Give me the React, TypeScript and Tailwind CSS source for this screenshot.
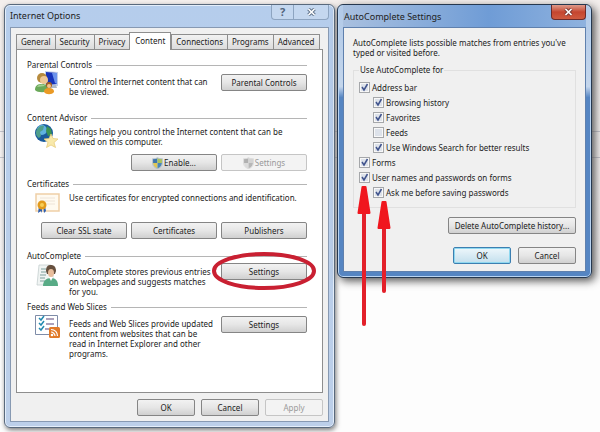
import type { ReactNode } from "react"
import clsx from "clsx"

const tabs = ["General", "Security", "Privacy", "Content", "Connections", "Programs", "Advanced"]

const options = [
  { id: "address", label: "Address bar", checked: true, nested: false },
  { id: "history", label: "Browsing history", checked: true, nested: true },
  { id: "favorites", label: "Favorites", checked: true, nested: true },
  { id: "feeds", label: "Feeds", checked: false, nested: true },
  { id: "search", label: "Use Windows Search for better results", checked: true, nested: true },
  { id: "forms", label: "Forms", checked: true, nested: false },
  { id: "passwords", label: "User names and passwords on forms", checked: true, nested: false },
  { id: "ask", label: "Ask me before saving passwords", checked: true, nested: true },
]

type ButtonProps = {
  children: ReactNode
  disabled?: boolean
  primary?: boolean
  className?: string
}

function Button({ children, disabled, primary, className }: ButtonProps) {
  return (
    <button
      type="button"
      disabled={disabled}
      className={clsx(
        "flex h-[17px] items-center justify-center gap-px whitespace-nowrap rounded-xs border",
        disabled && "border-[#c5c5c5] bg-[#f3f3f3] text-[#9a9a9a]",
        primary && "border-[#3c7fb1] bg-linear-to-b from-[#eef7fb] to-[#c3dfed] shadow-[inset_0_0_0_1px_#8fd8f0]",
        !disabled && !primary && "border-[#858585] bg-linear-to-b from-[#f2f2f2] via-[#e6e6e6] to-[#d0d0d0]",
        className,
      )}
    >
      {children}
    </button>
  )
}

function Shield({ faded }: { faded?: boolean }) {
  return (
    <svg width="11" height="12" viewBox="0 0 11 12" className={faded ? "opacity-50 grayscale" : ""}>
      <path d="M5.5 1C4 2 2.5 2 1 2v4h4.500z" fill="#3f77ac" />
      <path d="M5.5 1C7 2 8.500 2 10 2v4H5.500z" fill="#a9c25c" />
      <path d="M1 6h4.500v5.500C3 10.500 1.200 9 1 6z" fill="#e0c754" />
      <path d="M5.500 6H10c-.2 3-2 4.500-4.500 5.500z" fill="#4a86b8" />
      <path d="M5.500.6C7 1.700 8.600 1.700 10.400 1.700V6c0 3.200-2.200 4.800-4.900 5.700C2.800 10.800.6 9.200.6 6V1.700C2.400 1.700 4 1.700 5.500.6z" fill="none" stroke="#a9b9c4" strokeWidth=".8" />
    </svg>
  )
}

function ParentalIcon() {
  return (
    <svg width="26" height="25" viewBox="0 0 26 25">
      <path d="M11 1l13 1v14l-13 1z" fill="#c3cfe8" />
      <path d="M12 2l11 1v11l-11 1z" fill="#1733ba" />
      <path d="M18 3l5 0v11l-2-1z" fill="#6c93ec" />
      <path d="M12 16l10-1 1 3h-9z" fill="#aeb9c9" />
      <circle cx="8" cy="8" r="5" fill="#b78b3e" />
      <circle cx="10" cy="10" r="4" fill="#edc795" />
      <path d="M1 20c0-5 3-6 7-6s7 2 7 6c-2 3-12 3-14 0z" fill="#6ba95a" />
      <path d="M3 17c2-3 6-3 8-1-3 0-5 1-8 1z" fill="#a5cf94" />
      <circle cx="15" cy="15" r="3" fill="#a45f20" />
      <circle cx="15" cy="16" r="2" fill="#f0c490" />
      <path d="M10 22c0-3 2-4 5-4s5 1 5 4c-2 3-8 3-10 0z" fill="#ea9a25" />
    </svg>
  )
}

function AdvisorIcon() {
  return (
    <svg width="26" height="25" viewBox="0 0 26 25">
      <circle cx="10" cy="10" r="9" fill="#1a5b9c" />
      <circle cx="8" cy="7" r="5" fill="#5fb2df" />
      <path d="M3 6c2-3 5-4 7-3l-1 4-3 2 1 4-2 2c-3-2-4-5-2-9z" fill="#4f9f8a" />
      <path d="M13 3l4 3 1 6-4 1-2-5z" fill="#3b9352" />
      <path d="M17 11l2 4.500 5 .500-4 3.500 1.500 5-4.500-2.500-4.500 2.500 1.500-5-4-3.500 5-.5z" fill="#f8e9ab" stroke="#e6c873" strokeWidth=".7" />
    </svg>
  )
}

function CertificateIcon() {
  return (
    <svg width="26" height="25" viewBox="0 0 26 25">
      <path d="M2 5h23v17H2z" fill="#fffaf0" stroke="#efcfa6" strokeWidth="1.500" />
      <path d="M6 9h15M6 12h15M13 15h8" stroke="#eee4d8" strokeWidth="1" />
      <path d="M5 17l-1 7 3-2 1 2v-7zM9 17l1 7 2-2-1-5z" fill="#2e5fb0" />
      <circle cx="8" cy="16" r="4.500" fill="#e29a1c" />
      <circle cx="8" cy="16" r="2" fill="#f8ce55" />
    </svg>
  )
}

function AutoCompleteIcon() {
  return (
    <svg width="26" height="27" viewBox="0 0 26 27">
      <path d="M5 4h12l2 2v18H3z" fill="#f0f4f3" stroke="#c5cfcf" strokeWidth=".8" />
      <path d="M7 8h5M7 11h5M6 14h6M6 17h5M6 20h5" stroke="#7f9f9d" strokeWidth="1.200" />
      <path d="M12 10c0-5 2-6 5-6s5 2 5 6l-1 3h-8z" fill="#66503f" />
      <ellipse cx="17" cy="12" rx="3" ry="4" fill="#e8bd9c" />
      <path d="M9 25c0-5 3-8 8-8s7 3 7 8z" fill="#58ab86" />
      <path d="M15 16l2 4 2-4z" fill="#fff" />
    </svg>
  )
}

function FeedsIcon() {
  return (
    <svg width="26" height="26" viewBox="0 0 26 26">
      <path d="M1.500 3.500h22v19h-22z" fill="#fff" stroke="#7e8ca8" />
      <path d="M5 6l2 2 3-4M5 11l2 2 3-4M5 16l2 2 3-4" fill="none" stroke="#238ab0" strokeWidth="1.500" />
      <path d="M12 7h8M12 12h8M11 17h4" stroke="#9184a6" strokeWidth="1.300" />
      <rect x="15" y="15" width="11" height="11" rx="1.500" fill="#e17a28" />
      <circle cx="18" cy="23" r="1.300" fill="#fff" />
      <path d="M17 20c2 0 4 2 4 4M17 17.500c4 0 6.500 3 6.500 6.500" fill="none" stroke="#fff" strokeWidth="1.200" />
    </svg>
  )
}

type SectionProps = {
  title: string
  icon: ReactNode
  action?: ReactNode
  children: ReactNode
  footer?: ReactNode
  className?: string
  textClassName?: string
}

function Section({ title, icon, action, children, footer, className, textClassName = "pt-1" }: SectionProps) {
  return (
    <section className={className}>
      <div className="flex items-center gap-1">
        <h2>{title}</h2>
        <div className="h-px flex-1 bg-[#b5b5b5]" />
      </div>
      <div className="flex items-start pl-[7px]">
        <div className="w-[35px] shrink-0">{icon}</div>
        <p className={clsx("flex-1 whitespace-nowrap", textClassName)}>{children}</p>
        {action}
      </div>
      {footer}
    </section>
  )
}

function Arrow({ length, className }: { length: number; className: string }) {
  return (
    <svg width="14" height={length} className={clsx("pointer-events-none absolute z-10", className)}>
      <path d={`M7 4v${length - 6}`} stroke="#e3202a" strokeWidth="4" strokeLinecap="round" />
      <path d="M5.500 2h3l4 26h-11z" fill="#f0161e" stroke="#f0161e" strokeWidth="2" strokeLinejoin="round" />
    </svg>
  )
}

function CloseGlyph({ stroke }: { stroke: string }) {
  return (
    <svg width="9" height="8" viewBox="0 0 9 8">
      <path d="M1.500 1l6 6M7.500 1l-6 6" stroke={stroke} strokeWidth="3.500" />
      <path d="M1.500 1l6 6M7.500 1l-6 6" stroke="#fff" strokeWidth="1.600" />
    </svg>
  )
}

function InternetOptions() {
  return (
    <div className="rounded-md border border-[#59697c] bg-linear-to-b from-[#b5cdec] to-[#bccfe9] px-[5px] pb-[5px] shadow-[inset_0_0_0_1px_#e4eefa,1px_2px_5px_#777]">
      <header className="flex h-[22px] items-start justify-between">
        <h1 className="pt-[6px] text-[9px] leading-[10px]">Internet Options</h1>
        <div className="flex h-[15px] rounded-b-sm border border-t-0 border-[#8da4c0] bg-[#c4d7ef] text-[#51647c]">
          <button type="button" aria-label="Help" className="flex w-[22px] items-center justify-center border-r border-[#8da4c0] text-[11px] font-bold">
            ?
          </button>
          <button type="button" aria-label="Close" className="flex w-[34px] items-center justify-center">
            <CloseGlyph stroke="#60738b" />
          </button>
        </div>
      </header>
      <div className="border border-[#8799b2] bg-[#f0f0f0] px-[5px] pt-[4px] pb-[5px]">
        <div role="tablist" className="flex items-end">
          {tabs.map((tab) => (
            <button
              key={tab}
              type="button"
              role="tab"
              aria-selected={tab === "Content"}
              className={clsx(
                "border border-b-0 border-[#8e8e8e]",
                tab === "Content"
                  ? "relative -mb-px h-[18px] bg-white px-[5px] pb-px"
                  : "-mr-px h-[15px] bg-linear-to-b from-[#f2f2f2] to-[#dcdcdc] px-1",
              )}
            >
              {tab}
            </button>
          ))}
        </div>
        <div className="border border-[#8e8e8e] bg-white pt-[10px] pr-[15px] pb-[33px] pl-[10px]">
          <Section
            title="Parental Controls"
            icon={<ParentalIcon />}
            action={<Button className="mt-1 w-[86px]">Parental Controls</Button>}
            className="mb-4"
            textClassName="pt-[7px]"
          >
            Control the Internet content that can
            <br />
            be viewed.
          </Section>
          <Section
            title="Content Advisor"
            icon={<AdvisorIcon />}
            className="mb-2"
            footer={
              <div className="mt-[6px] flex justify-end gap-1">
                <Button className="w-[86px]">
                  <Shield />
                  Enable...
                </Button>
                <Button disabled className="w-[86px]">
                  <Shield faded />
                  Settings
                </Button>
              </div>
            }
          >
            Ratings help you control the Internet content that can be
            <br />
            viewed on this computer.
          </Section>
          <Section
            title="Certificates"
            icon={<CertificateIcon />}
            className="mb-3"
            footer={
              <div className="mt-2 flex justify-end gap-1">
                <Button className="w-[86px]">Clear SSL state</Button>
                <Button className="w-[86px]">Certificates</Button>
                <Button className="w-[86px]">Publishers</Button>
              </div>
            }
          >
            Use certificates for encrypted connections and identification.
          </Section>
          <Section
            title="AutoComplete"
            icon={<AutoCompleteIcon />}
            className="mb-[5px]"
            textClassName="pt-[6px]"
            action={
              <div className="relative mt-[2px]">
                <Button className="w-[86px]">Settings</Button>
                <svg width="106" height="40" className="pointer-events-none absolute -top-3 -left-[10px]">
                  <ellipse cx="53" cy="20" rx="50" ry="17" fill="none" stroke="#c92032" strokeWidth="4" />
                </svg>
              </div>
            }
          >
            AutoComplete stores previous entries
            <br />
            on webpages and suggests matches
            <br />
            for you.
          </Section>
          <Section
            title="Feeds and Web Slices"
            icon={<FeedsIcon />}
            textClassName="pt-[7px]"
            action={<Button className="mt-1 w-[86px]">Settings</Button>}
          >
            Feeds and Web Slices provide updated
            <br />
            content from websites that can be
            <br />
            read in Internet Explorer and other
            <br />
            programs.
          </Section>
        </div>
        <div className="mt-[6px] flex justify-end gap-[6px]">
          <Button className="w-[58px]">OK</Button>
          <Button className="w-[58px]">Cancel</Button>
          <Button disabled className="w-[58px]">Apply</Button>
        </div>
      </div>
    </div>
  )
}

function Option({ id, label, checked, nested }: (typeof options)[number]) {
  return (
    <div className={clsx("flex h-[15px] items-center gap-[2px]", nested && "pl-[14px]")}>
      <span className="grid size-[11px]">
        <input
          id={id}
          type="checkbox"
          defaultChecked={checked}
          className="peer col-start-1 row-start-1 size-[11px] appearance-none border border-[#a5a7aa] bg-[#dde2ea] shadow-[inset_0_0_0_1px_#f8f8f8]"
        />
        <svg viewBox="0 0 11 11" className="pointer-events-none invisible col-start-1 row-start-1 peer-checked:visible">
          <path d="M3 5l2 3 3.500-6" fill="none" stroke="#40538c" strokeWidth="1.500" />
        </svg>
      </span>
      <label htmlFor={id} className="whitespace-nowrap">{label}</label>
    </div>
  )
}

function AutoCompleteSettings() {
  return (
    <div className="relative rounded-md border border-[#26384f] bg-linear-to-b from-[#b4cbe8] from-5% via-[#c4d6ec] via-30% to-[#5585c2] to-34% px-[5px] pb-[5px] shadow-[inset_0_0_0_1px_#b9d4f2,3px_3px_9px_#555]">
      <header className="flex h-[22px] items-start justify-between bg-linear-to-r from-[#a9c0df] via-[#6f9cd6] via-60% to-[#8fb2de] pl-px">
        <h1 className="pt-[7px] text-[9px] leading-[10px]">AutoComplete Settings</h1>
        <button type="button" aria-label="Close" className="flex h-[15px] w-[35px] items-center justify-center rounded-b-sm border border-t-0 border-[#6b2a2a] bg-linear-to-b from-[#dd9a8c] via-[#c5452f] to-[#cf5a3f]">
          <CloseGlyph stroke="#7c3a35" />
        </button>
      </header>
      <div className="border border-[#5f80ad] bg-[#f0f0f0] px-[9px] pt-[10px] pb-[7px]">
        <p>
          AutoComplete lists possible matches from entries you've
          <br />
          typed or visited before.
        </p>
        <fieldset className="mt-[7px] border border-[#e0e0e0] px-[5px] pb-[7px]">
          <legend className="px-px">Use AutoComplete for</legend>
          <div className="pt-[5px]">
            {options.map((option) => (
              <Option key={option.id} {...option} />
            ))}
          </div>
        </fieldset>
        <Button className="mt-[9px] ml-auto w-[128px]">Delete AutoComplete history...</Button>
        <div className="mt-[13px] flex justify-end gap-[7px]">
          <Button primary className="w-[58px]">OK</Button>
          <Button className="w-[58px]">Cancel</Button>
        </div>
      </div>
      <Arrow length={141} className="top-[180px] left-[19px]" />
      <Arrow length={93} className="top-[195px] left-[39px]" />
    </div>
  )
}

export default function App() {
  return (
    <main className="relative isolate grid min-h-screen grid-cols-[331fr_255fr] items-start gap-[2px] bg-linear-to-b from-[#f4efed] via-[#f6f3f3] via-60% to-[#fdfdfd] to-66% pt-1 pr-2 pl-1 font-['Noto_Sans','DejaVu_Sans_Condensed',sans-serif] text-[8px] leading-[10px] text-[#222]">
      <div className="absolute inset-x-0 top-[131px] -z-10 h-[27px] border-y border-[#c4c4cc]" />
      <InternetOptions />
      <AutoCompleteSettings />
    </main>
  )
}
